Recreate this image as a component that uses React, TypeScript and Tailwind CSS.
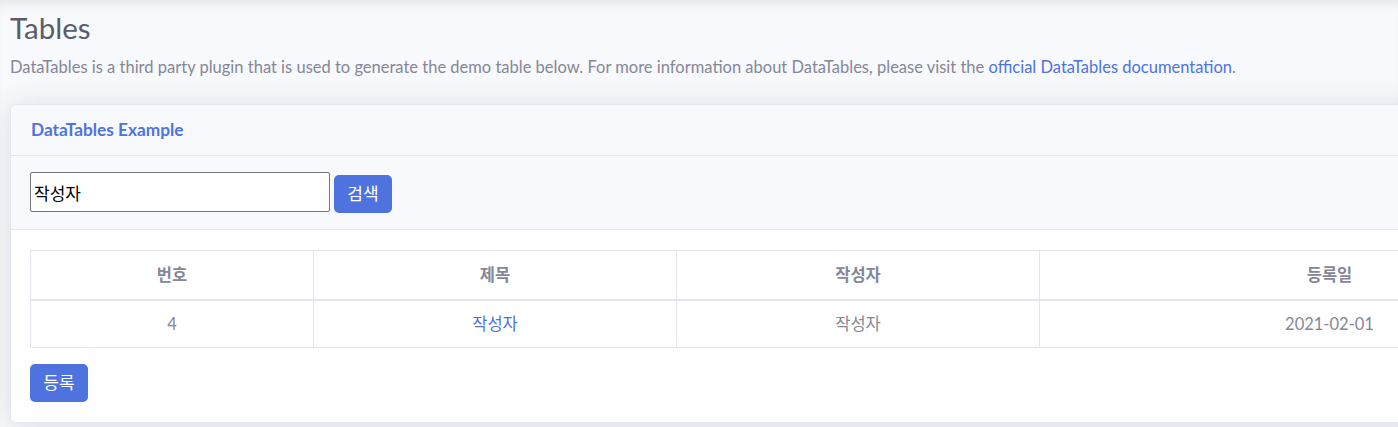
export default function App() {
  const cols = [
    { label: '번호', w: 'w-[283px]' },
    { label: '제목', w: 'w-[363px]' },
    { label: '작성자', w: 'w-[363px]' },
    { label: '등록일', w: 'w-[580px]' },
  ]

  return (
    <div className="w-[1398px] h-[427px] overflow-hidden bg-[#f8f9fc] shadow-[inset_0_10px_12px_-8px_rgba(58,59,69,0.12)] font-['Lato','Noto_Sans_CJK_KR',sans-serif] text-[16.5px] text-[#858796]">
      <div className="pl-[10px] pt-[11px]">
        {/* Page heading */}
        <h1 className="text-[29.5px] leading-[34px] text-[#5a5c69] mb-[10px]">Tables</h1>
        <p className="leading-6 mb-[25px]">
          DataTables is a third party plugin that is used to generate the demo table below. For more information about
          DataTables, please visit the{' '}
          <a href="#" className="text-[#4e73df]">
            official DataTables documentation
          </a>
          .
        </p>

        {/* Card */}
        <div className="w-[1631px] bg-white border border-[#e3e6f0] rounded-[5.6px] shadow-[0_2.4px_28px_0_rgba(58,59,69,0.15)]">
          <div className="bg-[#f8f9fc] border-b border-[#e3e6f0] px-5 h-[51px] flex items-center rounded-t-[5.6px]">
            <h6 className="font-bold text-[17.3px] text-[#4e73df] leading-[1.2]">DataTables Example</h6>
          </div>

          <div className="bg-[#f8f9fc] border-b border-[#e3e6f0] pl-[19px] pt-4 h-[74px] flex items-start gap-1">
            <input
              defaultValue="작성자"
              className="w-[300px] h-[40px] border border-[#767676] rounded-[2px] bg-white px-[3px] text-[17px] text-black font-['Noto_Sans_CJK_KR',sans-serif] outline-none"
            />
            <button className="mt-[3px] h-[38px] w-[58px] rounded-[5px] bg-[#4e73df] text-white text-[17px] leading-6">
              검색
            </button>
          </div>

          <div className="pl-[19px] pt-5 pb-5">
            <table className="border-collapse mb-4">
              <thead>
                <tr className="h-[49px]">
                  {cols.map((c) => (
                    <th
                      key={c.label}
                      className={`${c.w} border border-[#e3e6f0] border-b-2 px-3 py-0 leading-6 font-semibold text-center`}
                    >
                      {c.label}
                    </th>
                  ))}
                </tr>
              </thead>
              <tbody>
                <tr className="h-[48px]">
                  <td className="border border-[#e3e6f0] px-3 py-0 leading-6 text-center">4</td>
                  <td className="border border-[#e3e6f0] px-3 py-0 leading-6 text-center">
                    <a href="#" className="text-[#4e73df]">
                      작성자
                    </a>
                  </td>
                  <td className="border border-[#e3e6f0] px-3 py-0 leading-6 text-center">작성자</td>
                  <td className="border border-[#e3e6f0] px-3 py-0 leading-6 text-center">2021-02-01</td>
                </tr>
              </tbody>
            </table>
            <button className="h-[38px] w-[58px] rounded-[5px] bg-[#4e73df] text-white text-[17px] leading-6">등록</button>
          </div>
        </div>
      </div>
    </div>
  )
}
